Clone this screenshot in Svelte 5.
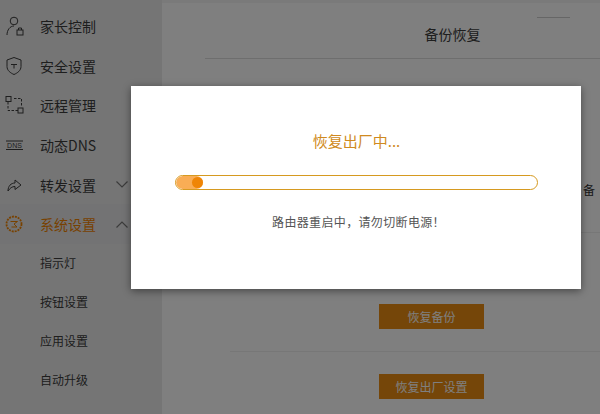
<script>
  const menu = [
    { label: "家长控制", icon: "parent" },
    { label: "安全设置", icon: "shield" },
    { label: "远程管理", icon: "remote" },
    { label: "动态DNS", icon: "dns" },
    { label: "转发设置", icon: "forward", arrow: "down" },
    { label: "系统设置", icon: "system", arrow: "up", active: true },
  ];
  const subMenu = ["指示灯", "按钮设置", "应用设置", "自动升级"];
  let progress = 7.5;
</script>

<div class="page">
  <aside class="sidebar">
    {#each menu as item}
      <div class="row" class:active={item.active}>
        <svg class="icon" viewBox="0 0 20 20" fill="none" stroke="currentColor" stroke-width="1">
          {#if item.icon === "parent"}
            <circle cx="10" cy="5" r="3.800" />
            <path d="M3 19c0-5 3-9 7-9" />
            <rect x="13" y="14" width="6" height="5" />
            <path d="M14.500 14v-2h3v2" />
          {:else if item.icon === "shield"}
            <path d="M10 1.500l7 2.500v6.500c0 4-3.500 6.500-7 8-3.500-1.500-7-4-7-8V4z" />
            <path d="M7 8.500h6M10 8.500v4" />
          {:else if item.icon === "remote"}
            <rect x="2" y="1.500" width="5" height="5" />
            <rect x="14" y="13" width="5" height="5" />
            <path d="M4 7v8.500h10M10 3.500h7.500V12" stroke-dasharray="2.500 1.500" />
          {:else if item.icon === "dns"}
            <path d="M2 6h17M2 14.500h17" />
            <text x="10.500" y="12.500" class="dns">DNS</text>
          {:else if item.icon === "forward"}
            <path d="M4 16c0-5 3-8 7-8V5l6 5-6 4.500v-3c-3 0-5 1.500-7 4.500z" />
          {:else}
            <circle cx="10" cy="10" r="7.500" stroke-dasharray="2 1" stroke-width="1.800" />
            <path d="M6.500 7.500h7l-3.500 2.500 3 3H7.500" />
          {/if}
        </svg>
        <span class="label">{item.label}</span>
        {#if item.arrow}
          <svg class="arrow" viewBox="0 0 12 7" fill="none" stroke="currentColor" stroke-width="1.200">
            {#if item.arrow === "down"}
              <path d="M.5.500L6 6 11.500.500" />
            {:else}
              <path d="M.5 6.500L6 1l5.500 5.500" />
            {/if}
          </svg>
        {/if}
      </div>
    {/each}
    <div class="sub-list">
      {#each subMenu as item}
        <div class="row sub"><span class="label">{item}</span></div>
      {/each}
    </div>
  </aside>

  <main class="content">
    <div class="top-mark"></div>
    <h2 class="title">备份恢复</h2>
    <div class="section first">
      <span class="side-text">备</span>
    </div>
    <div class="section actions">
      <button class="btn">恢复备份</button>
    </div>
    <div class="section actions last">
      <button class="btn">恢复出厂设置</button>
    </div>
  </main>

  <div class="backdrop"></div>

  <div class="modal">
    <h3 class="modal-title">恢复出厂中...</h3>
    <div class="track">
      <div class="fill" style="width: {progress}%">
        <span class="knob"></span>
      </div>
    </div>
    <p class="note">路由器重启中，请勿切断电源！</p>
  </div>
</div>

<style>
  :global(body) {
    margin: 0;
    background: #fff;
  }

  .page {
    position: relative;
    display: flex;
    width: 600px;
    height: 414px;
    overflow: hidden;
    font-family: "Noto Sans CJK SC", "Liberation Sans", sans-serif;
    color: #333;
  }

  .sidebar {
    width: 162px;
    flex-shrink: 0;
    background: #ebebeb;
    padding-top: 6.5px;
    box-sizing: border-box;
  }

  .row {
    display: flex;
    align-items: center;
    height: 39.6px;
    padding-left: 4px;
    font-size: 14px;
    line-height: 1;
    color: #3c3c3c;
  }

  .row.active {
    color: #f08300;
    background: #e6e6e8;
  }

  .sub-list {
    margin-top: -1px;
  }

  .row.sub {
    height: 39px;
    padding-left: 40px;
    font-size: 12px;
  }

  .icon {
    width: 20px;
    height: 20px;
    margin-right: 16px;
    flex-shrink: 0;
  }

  .dns {
    font-family: "Liberation Sans", sans-serif;
    font-size: 7px;
    text-anchor: middle;
    fill: currentColor;
    stroke: none;
  }

  .arrow {
    width: 12px;
    height: 7px;
    margin-left: 20px;
    color: #777;
  }

  /* the page underneath runs wider than the window, the title centres on that */
  .content {
    position: relative;
    flex: 0 0 538px;
    background: #fff;
    padding-left: 43px;
    border-top: 3px solid #f4f4f4;
    box-sizing: border-box;
  }

  .top-mark {
    position: absolute;
    left: 375px;
    top: 14px;
    width: 33px;
    height: 1px;
    background: #ccc;
  }

  .title {
    margin: 0;
    height: 56px;
    padding-top: 20px;
    box-sizing: border-box;
    border-bottom: 1px solid #ddd;
    font-size: 14px;
    font-weight: 400;
    line-height: 22px;
    text-align: center;
    color: #3c3c3c;
  }

  .section {
    display: flex;
  }

  .section.first {
    height: 174px;
    border-bottom: 1px solid #eee;
    align-items: center;
    font-size: 12px;
    padding-top: 88px;
    padding-left: 378px;
    box-sizing: border-box;
  }

  .actions {
    height: 119px;
    margin-left: 25px;
    padding: 71px 0 0 149px;
    box-sizing: border-box;
    border-bottom: 1px solid #eee;
  }

  .actions.last {
    height: 70px;
    padding-top: 22px;
    border-bottom: 0;
  }

  .btn {
    width: 105px;
    height: 25px;
    padding: 0;
    border: 0;
    background: #ea8c12;
    color: #fff;
    font: inherit;
    font-size: 12px;
    line-height: 25px;
  }

  .backdrop {
    position: absolute;
    inset: 0;
    background: rgba(0, 0, 0, 0.5);
  }

  .modal {
    position: absolute;
    left: 131px;
    top: 86px;
    width: 450px;
    height: 203px;
    box-sizing: border-box;
    padding: 44px 43px 0 44px;
    background: #fff;
    box-shadow: 0 2px 8px rgba(0, 0, 0, 0.45);
    text-align: center;
  }

  .modal-title {
    margin: 0 0 23px;
    font-size: 15px;
    font-weight: 400;
    line-height: 22px;
    color: #d08a20;
  }

  .track {
    height: 15px;
    box-sizing: border-box;
    border: 1px solid #d69a20;
    border-radius: 8px;
    background: #fff;
    overflow: hidden;
  }

  .fill {
    position: relative;
    height: 100%;
    background: #f9ad55;
    border-radius: 7px;
  }

  .knob {
    position: absolute;
    right: 0;
    top: 1px;
    width: 11px;
    height: 11px;
    border-radius: 50%;
    background: #ef8506;
  }

  .note {
    margin: 23px 0 0;
    padding-left: 4px;
    font-size: 12px;
    line-height: 18px;
    letter-spacing: 0.35px;
    color: #555;
  }
</style>
